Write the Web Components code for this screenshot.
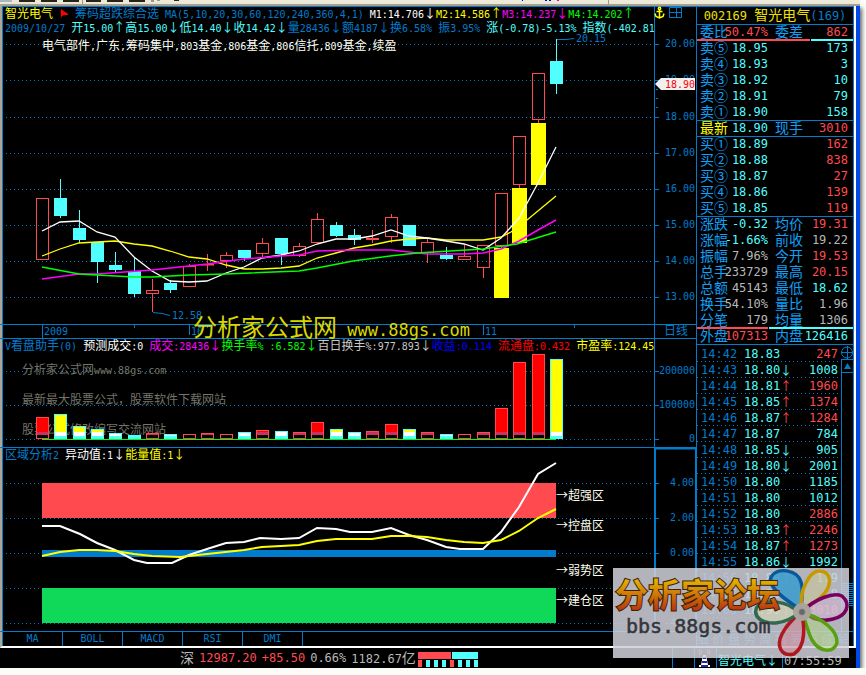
<!DOCTYPE html>
<html lang="zh-CN">
<head>
<meta charset="utf-8">
<title>智光电气 002169</title>
<style>
html,body{margin:0;min-height:100%;background:#fbfbf8}
body{font-family:"DejaVu Sans Mono","Noto Sans CJK SC",monospace}
</style>
</head>
<body>
<stock-terminal></stock-terminal>
<script>
const BLUE='#007ccc',SKY='#10a0f8',CYAN='#50ffff',RED='#ff4b50',GRAY='#b8b8b8';
const MONO='"DejaVu Sans Mono","Noto Sans CJK SC",monospace';
const wide=/[\u2010-\u2bff\u3000-\uffef]+|[^\u2010-\u2bff\u3000-\uffef]+/g;
const isWide=s=>/[\u2010-\u2bff\u3000-\uffef]/.test(s);
/* Latin runs are set smaller than CJK runs, so that one is half as wide as the other */
const mix=s=>s.match(wide).map(r=>isWide(r)?`<span class="c">${r}</span>`:`<span class="n">${r}</span>`).join('');
const mixS=s=>s.match(wide).map(r=>isWide(r)?`<tspan class="c">${r}</tspan>`:`<tspan class="n">${r}</tspan>`).join('');
const seg=(color,s)=>`<span style="color:${color}">${mix(s)}</span>`;
const BASE=`
 *{box-sizing:border-box}
 :host{display:block;font-family:${MONO}}
 .c{font-family:"Noto Sans CJK SC",sans-serif;font-size:var(--c,12px)}
 .n{font-family:"DejaVu Sans Mono",monospace;font-size:var(--n,10px)}
 svg{display:block;overflow:visible}
 text{white-space:pre}`;
const define=(name,css,html)=>customElements.define(name,class extends HTMLElement{
  constructor(){super();
    const t=document.createElement('template');
    t.innerHTML=`<style>${BASE}${css}</style>${html}`;
    this.attachShadow({mode:'open'}).append(t.content.cloneNode(true));}
});
const PANE=`
 :host{display:grid;min-width:0}
 svg,.lines{grid-area:1/1}
 svg{width:100%}
 .lines{overflow-x:clip;overflow-y:visible;padding-left:2px;font-size:12px;line-height:12px}
 .lines div{height:14px;white-space:pre}
 .dot{stroke:${BLUE};stroke-dasharray:1 3;shape-rendering:crispEdges}
 .rule{stroke:${BLUE};shape-rendering:crispEdges}
 .lbl{fill:${BLUE}}`;
const dots=ys=>ys.map(y=>`<line class="dot" x1="6" x2="100%" y1="${y}.5" y2="${y}.5"/>`).join('');
const rule=y=>`<line class="rule" x1="0" x2="101%" y1="${y}.5" y2="${y}.5"/>`;
const vt=(x,y,h)=>`<rect x="${x}" y="${y}" width="1" height="${h}" fill="${BLUE}"/>`;
const cx=i=>Math.round(42+i*18.357);
const line=(p,c,w)=>`<polyline points="${p}" fill="none" stroke="${c}" stroke-width="${w}"/>`;

/* kind, high, body top, body bottom, low */
const candles=[['r',198,198,260,260],['c',179,198,216,218],['c',210,228,240,243],['c',242,242,262,283],['c',252,265,270,273],['c',258,271,294,297],['r',279,290,294,312],['c',280,283,290,293],['r',264,266,287,287],['r',254,264,265,271],['r',252,255,261,268],['c',250,250,258,261],['r',238,243,254,257],['c',238,238,254,265],['r',243,246,256,257],['r',213,219,243,243],['c',222,225,236,237],['c',229,235,240,245],['r',230,238,240,243],['r',214,217,237,243],['c',225,225,246,246],['r',238,242,253,263],['c',247,255,259,260],['r',244,256,260,260],['r',245,245,268,278],['r',193,193,246,248],['r',136,136,185,188],['r',73,73,120,123],['c',39,61,84,94]];
const candle=([k,h,t,b,l],i)=>{const x=cx(i);
  return k==='c'?`<rect x="${x}" y="${h}" width="1" height="${l-h}" fill="${CYAN}"/><rect x="${x-6}" y="${t}" width="13" height="${b-t}" fill="${CYAN}"/>`
  :`<rect x="${x}" y="${h}" width="1" height="${t-h}" fill="${RED}"/><rect x="${x}" y="${b}" width="1" height="${l-b}" fill="${RED}"/><rect x="${x-5.5}" y="${t+.5}" width="12" height="${Math.max(b-t-1,.5)}" fill="none" stroke="${RED}"/>`;};

define('price-chart',PANE+`.lines .third{margin-top:4px;padding-left:37px}.flag{width:22px;display:inline-block;height:9px}.flag svg{width:22px}.mark{fill:#d8d800;--c:24px;--n:17px}`,`
<svg height="332"><g transform="translate(-3,-7)">
${dots([44,80,117,153,189,225,261,297])}
${rule(324)}${rule(338)}
${vt(42,324,14)}${vt(134,325,3)}${vt(189,325,10)}${vt(207,325,3)}${vt(391,325,3)}${vt(483,325,10)}${vt(574,325,3)}
<g class="lbl"><text x="44" y="335">${mixS('2009')}</text><text x="191" y="335">${mixS('10')}</text><text x="485" y="335">${mixS('11')}</text>
<text x="172" y="319">${mixS('12.58')}</text><text x="576" y="42">${mixS('20.15')}</text></g>
${candles.map(candle).join('')}
<path d="M153 312.500L162 313.500L170 315.500M557 39.500H566L574 38.500" fill="none" stroke="${BLUE}"/>
${line('42,256 60,249 79,243 97,242 115,241 134,244 152,246 170,251 189,257 207,259 226,265 244,269 262,269 281,268 299,266 317,258 336,253 354,248 372,245 391,241 409,239 427,238 446,240 483,240 501,237 511,232 527,220 556,196','#ff0',1.3)}
<path d="M494 248h15v50h-15zM512 188h15v55h-15zM531 123h15v62h-15z" fill="#ff0"/>
${line('42,231 60,222 79,221 97,232 115,237 134,257 152,271 170,281 189,282 207,281 226,273 244,267 262,258 281,255 299,251 317,244 336,239 354,239 372,236 391,230 409,236 427,238 446,241 464,244 483,250 501,238 519,218 538,183 556,147','#fff',1.3)}
${line('42,279 79,274 97,274 152,270 207,264 244,259 281,256 299,255 317,251 354,250 391,250 409,252 427,254 464,254 483,253 501,249 519,241 538,230 556,220','#f0f',1.5)}
${line('42,267 79,274 97,275 134,277 152,277 189,275 226,274 299,271 317,268 353,261 390,256 417,253 483,249 517,244 556,232','#0f0',1.5)}
<text class="mark" x="193" y="336">${mixS('分析家公式网')}<tspan class="n"> www.88gs.com</tspan></text>
</g></svg>
<div class="lines">
<div>${seg('#ff0','智光电气')}<span class="flag"><svg width="22" height="9"><path d="M8 0v9l1-2 2-1h4v-1z" fill="#f00"/></svg></span>${seg(BLUE,'筹码超跌综合选 MA(5,10,20,30,60,120,240,360,4,1) ')}${seg('#fff','M1:14.706↓')}${seg('#ff0','M2:14.586↑')}${seg('#f0f','M3:14.237↓')}${seg('#0f0','M4:14.202↑')}</div>
<div>${seg(BLUE,'2009/10/27 ')}${seg(CYAN,'开15.00↑高15.00↓低14.40↓收14.42↓')}${seg(BLUE,'量28436↓额4187↓换6.58% 振3.95% ')}${seg(CYAN,'涨(-0.78)-5.13% 指数(-402.81')}</div>
<div class="third">${seg('#fffff0','电气部件,广东,筹码集中,803基金,806基金,806信托,809基金,续盈')}</div>
</div>`);

const vol=['r417','c414','c426','c429','c433','c435','r433','c434','r434','r433','r434','c432','r430','c431','r432','r422','c429','c432','r431','r424','c429','r432','c434','r434','r432','r408','r362','r354','c359'];
const bar=(s,i)=>{const k=s[0],t=+s.slice(1),x=cx(i)-6,e=k==='r'?RED:CYAN;let o='';
  if(k==='r'){o+=`<rect x="${x}" y="${t}" width="13" height="${439-t}" fill="#000"/>`;
    if(t<432)o+=`<rect x="${x}" y="${t}" width="13" height="${432-t}" fill="#f00"/>`;
    const m=Math.max(t,432);o+=`<rect x="${x}" y="${m}" width="13" height="${435-m}" fill="#cc3060"/>`;
  }else{o+=`<rect x="${x}" y="${t}" width="13" height="${439-t}" fill="${CYAN}"/>`;
    if(t<432)o+=`<rect x="${x}" y="${t}" width="13" height="${432-t}" fill="#ff0"/>`;
    const m=Math.max(t,432);o+=`<rect x="${x}" y="${m}" width="13" height="${436-m}" fill="#fff"/>`;}
  return o+`<rect x="${x+.5}" y="${t+.5}" width="12" height="${438-t}" fill="none" stroke="${e}"/>`;};
define('volume-chart',PANE+`.ad{fill:#74746a}`,`
<svg height="109"><g transform="translate(-3,-339)">
${dots([371,405,439])}${rule(447)}
<g class="ad"><text x="22" y="374">${mixS('分析家公式网')}<tspan class="n">www.88gs.com</tspan></text><text x="22" y="404">${mixS('最新最大股票公式，股票软件下载网站')}</text><text x="22" y="434">${mixS('股票公式修改编写交流网站')}</text></g>
${vol.map(bar).join('')}
<rect x="42" y="439" width="514" height="1" fill="#0f0"/>
</g></svg>
<div class="lines"><div>${seg(BLUE,'V看盘助手(0) ')}${seg('#fff','预测成交:0 ')}${seg('#f0f','成交:28436↓')}${seg('#0f0','换手率% :6.582↓')}${seg('#c8c8c8','百日换手%:977.893↓')}${seg('#00f','收益:0.114 ')}${seg('#f00','流通盘:0.432 ')}${seg('#ff0','市盈率:124.45')}</div></div>`);

define('zone-chart',PANE,`
<svg height="184"><g transform="translate(-3,-448)">
${dots([483,518,553,588,623])}${rule(631)}
<rect x="42" y="483" width="514" height="35" fill="${RED}"/>
<rect x="42" y="550" width="514" height="7" fill="${BLUE}"/>
<rect x="42" y="588" width="514" height="35" fill="#10d858"/>
${line('42,526 60,526 80,534 97,543 115,550 134,560 147,563 172,563 189,555 207,549 226,543 244,542 260,538 281,539 299,538 317,528 336,529 350,532 372,532 391,528 409,535 427,540 446,547 460,549 483,549 501,532 519,507 538,474 556,463','#fff',2)}
${line('42,556 60,552 79,550 97,550 115,551 134,554 152,556 180,557 207,554 244,550 262,547 281,546 299,545 317,541 336,539 372,539 391,536 409,536 427,537 446,540 464,542 483,543 501,540 519,531 538,518 556,509','#ff0',2)}
<g fill="#fffff0">${[['超强区',500],['控盘区',530],['弱势区',575],['建仓区',605]].map(([s,y])=>`<text x="556" y="${y}">${mixS('→'+s)}</text>`).join('')}</g>
</g></svg>
<div class="lines"><div>${seg(BLUE,'区域分析2 ')}${seg('#fff','异动值:1↓')}${seg('#ff0','能量值:1↓')}</div></div>`);

const SCALE=`:host{position:relative}.rule{fill:${BLUE}}text{fill:${BLUE};text-anchor:end}`;
const tick=y=>`<rect x="655" y="${y}" width="4" height="1" fill="${BLUE}"/>`;
const frame=(top,h)=>`<rect x="654" y="${top}" width="1" height="${h}" fill="${BLUE}"/>`;
define('price-scale',SCALE,`<svg width="42" height="332"><g transform="translate(-654,-7)">${frame(7,332)}
${[[44,'20.00'],[80,'19.00'],[117,'18.00'],[153,'17.00'],[189,'16.00'],[225,'15.00'],[261,'14.00'],[297,'13.00']].map(([y,s])=>tick(y)+`<text x="695" y="${y+3}"><tspan class="n">${s}</tspan></text>`).join('')}
<path d="M656 89h2v1h-2zM656 98h2v1h-2zM656 107h2v1h-2z" fill="${BLUE}"/>
<path d="M655 84l6-6h34v12h-34z" fill="#f0f0f0"/><text x="695" y="88" style="fill:#f00"><tspan class="n">18.90</tspan></text>
<path d="M654 324h42v1h-42zM654 338h42v1h-42z" class="rule"/>
<text x="688" y="335"><tspan class="c">日线</tspan></text>
<g fill="none" stroke="#ff0" stroke-width="1.500"><path d="M659.500 10V18M655 13.500l1 3 3.500 1.500 3.500-1.500 1-3M656.500 11.500h6"/><circle cx="659.500" cy="8.500" r="1.200"/></g>
<path d="M669.500 7.500h12v10h-12zM676.500 7.500v10M669.500 12.500h12" fill="none" stroke="${BLUE}"/>
</g></svg>`);
define('volume-scale',SCALE,`<svg width="42" height="109"><g transform="translate(-654,-339)">${frame(339,109)}
${[[371,'200000'],[405,'100000'],[439,'0']].map(([y,s])=>tick(y)+`<text x="695" y="${y+3}"><tspan class="n">${s}</tspan></text>`).join('')}<rect class="rule" x="654" y="447" width="42" height="1"/></g></svg>`);
define('zone-scale',SCALE,`<svg width="42" height="184"><g transform="translate(-654,-448)">
<path d="M655 631V448.500H696V631" fill="none" stroke="${BLUE}" stroke-width="2"/>
${[[483,'4.00'],[518,'2.00'],[553,'0.00'],[588,'-2.00'],[623,'-4.00']].map(([y,s])=>tick(y)+`<text x="694" y="${y+3}"><tspan class="n">${s}</tspan></text>`).join('')}
<rect class="rule" x="654" y="631" width="42" height="1"/></g></svg>`);

define('indicator-tabs',`:host{display:flex;height:14px}button{all:unset;box-sizing:border-box;width:60px;height:14px;text-align:center;color:${BLUE};font:10px/14px "DejaVu Sans Mono",monospace;border-right:1px solid ${BLUE}}`,
['MA','BOLL','MACD','RSI','DMI'].map(s=>`<button type="button">${s}</button>`).join(''));

/* label, value, value colour, label 2, value 2, value-2 colour */
const row=(a,b,bc,c,d,dc,cls='',lc=SKY)=>`<tr class="${cls}"><th style="color:${lc}">${a}</th><td style="color:${bc}">${b}</td><th>${c}</th><td style="color:${dc}">${d}</td></tr>`;
define('quote-panel',`
 :host{color:${SKY}}
 h2{margin:0;height:18px;border-bottom:1px solid ${BLUE};font-weight:400;font-size:14px;line-height:15px;text-align:center;color:#f0e000;white-space:pre;--c:14px;--n:12px}
 h2 b{font-weight:400;color:${BLUE}}
 table,tbody{display:block}
 tr{display:grid;grid-template-columns:24px 44px 28px 1fr;padding:0 5px 0 3px;height:16px}
 th,td{padding:0;font-weight:400;line-height:15px;white-space:nowrap;height:14px}
 th{font-family:"Noto Sans CJK SC",sans-serif;font-size:14px;line-height:12px;text-align:left}
 th+td+th{padding-left:7px}
 td{font-size:12px;text-align:right}
 .end{border-bottom:1px solid ${BLUE}}
 .bar{border-bottom:2px solid;border-image:linear-gradient(90deg,${RED} var(--s),#000 var(--s),#000 calc(var(--s) + 1px),${CYAN} calc(var(--s) + 1px)) 1}`,`
<h2>${mix('002169 智光电气')}<b>${mix('(169)')}</b></h2>
<table><tbody>
${row('委比','50.47%',RED,'委差','862',RED,'bar').replace('<tr','<tr style="--s:113px"')}
${[['⑤','18.95','173'],['④','18.93','3'],['③','18.92','10'],['②','18.91','79'],['①','18.90','158']].map(([n,p,v],i)=>row('卖'+n,p,CYAN,'',v,CYAN,i==4?'end':'')).join('')}
${row('最新','18.90',CYAN,'现手','3010',RED,'end','#ff0')}
${[['①','18.89','162'],['②','18.88','838'],['③','18.87','27'],['④','18.86','139'],['⑤','18.85','119']].map(([n,p,v],i)=>row('买'+n,p,CYAN,'',v,RED,i==4?'end':'')).join('')}
${row('涨跌','-0.32',CYAN,'均价','19.31',RED)}${row('涨幅','-1.66%',CYAN,'前收','19.22',GRAY)}${row('振幅','7.96%',GRAY,'今开','19.53',RED)}${row('总手','233729',GRAY,'最高','20.15',RED)}${row('总额','45143',GRAY,'最低','18.62',CYAN)}${row('换手','54.10%',GRAY,'量比','1.96',GRAY)}${row('分笔','179',GRAY,'均量','1306',GRAY,'bar').replace('<tr','<tr style="--s:71px"')}
${row('外盘','107313',RED,'内盘','126416',CYAN,'end')}
</tbody></table>`);

const ticks=[['14:42','18.83','',247,1],['14:43','18.80','↓',1008,0],['14:44','18.81','↑',1960,1],['14:45','18.85','↑',1374,1],['14:46','18.87','↑',1284,1],['14:47','18.87','',784,0],['14:48','18.85','↓',905,0],['14:49','18.80','↓',2001,0],['14:50','18.80','',1185,0],['14:51','18.80','',1012,0],['14:52','18.80','',2886,1],['14:53','18.83','↑',2246,1],['14:54','18.87','↑',1273,1],['14:55','18.86','↓',1992,0],['14:56','18.88','↑',179,0],['14:57','18.88','',8,0],['15:00','18.90','↑',3010,1]];
define('tick-list',`
 :host{display:grid;grid-template-columns:1fr 12px;flex:1;font-size:12px}
 table{border-spacing:0;width:100%;align-self:start;table-layout:fixed;padding-top:1px}
 tr{background:linear-gradient(90deg,${BLUE} 1px,transparent 1px) left bottom/4px 1px repeat-x}
 td{padding:0;height:16px;line-height:16px;white-space:nowrap;font-size:12px}
 td:first-child{width:47px;padding-left:4px;color:${BLUE}}
 td:nth-child(2){width:36px;color:${CYAN}}
 td:nth-child(3){width:14px;font-family:"Noto Sans CJK SC",sans-serif}
 td:last-child{text-align:right;padding-right:3px}
 .scroll{display:flex;flex-direction:column;color:${BLUE}}
 .scroll svg{flex:none}
 .track{flex:1;border-left:1px solid ${BLUE};display:flex;align-items:flex-end}
 .thumb{width:100%;height:24px;margin-bottom:24px;background:repeating-linear-gradient(${BLUE} 0 1px,#000 1px 2px)}`,`
<table><tbody>${ticks.map(([t,p,a,v,r])=>`<tr><td>${t}</td><td>${p}</td><td style="color:${a==='↑'?RED:CYAN}">${a}</td><td style="color:${r?RED:CYAN}">${v}</td></tr>`).join('')}</tbody></table>
<div class="scroll"><svg width="12" height="28"><path d="M0 7.500H12M6.500 1V14M.5 14.500H12M.5 14V28M.5 27.500H12" stroke="${BLUE}" fill="none"/><circle cx="6" cy="7.500" r="5.500" fill="none" stroke="${BLUE}"/><path d="M3 24h7l-3.500-6z" fill="${BLUE}"/></svg><div class="track"><div class="thumb"></div></div></div>`);

define('panel-tabs',`:host{height:15px;border-top:1px solid ${BLUE};display:flex;color:${BLUE}}
 button{all:unset;flex:1;font:12px/14px "Noto Sans CJK SC",sans-serif}button:first-child{color:#fff}`,
[...'细价盘势周指筹不成解'].map(s=>`<button type="button">${s}</button>`).join(''));

define('tool-strip',`:host{height:6px;background:#ece9d8;border-bottom:2px solid #aaa698;overflow:hidden}svg{width:100%}`,
`<svg height="4"><path d="M0 0h12v2H0z" fill="#a8b8b8"/><path d="M19 0h16v2H19zM41 0h16v2H41zM63 0h16v2H63zM86 0h15v2H86zM107 0h16v2h-16zM129 0h16v2h-16zM174 0h5v1h-5z" fill="#282418"/><path d="M82 0h1v4h-1zM151 0h3v2h-3zM157 0h3v1h-3zM608 0h1v4h-1z" fill="#9c9888"/><path d="M522 0h1v1h-1zM545 0h2v1h-2zM549 0h2v1h-2z" fill="#00c"/><path d="M557 0h2v1h-2z" fill="#d0d"/></svg>`);

define('status-bar',`
 :host{display:grid;grid-template-columns:1fr 184px;height:20px;background:#000;--c:14px;--n:12px;color:${GRAY};font-size:14px;line-height:18px;white-space:pre}
 .idx{display:flex;padding-left:180px;gap:5px;min-width:0}
 .idx span{white-space:pre}
 .idx svg{margin:3px 0 0 -3px}
 .r{display:flex}
 .r>*{border-left:1px solid ${BLUE};height:20px}
 .a{width:22px}.i{width:22px}.nm,.t{padding:3px 0 0 1px}.nm{width:66px;color:${CYAN};--c:12px;font-size:12px}`,`<div class="idx"><span>${mix('深')}</span>${seg(RED,'12987.20')}${seg(RED,'+85.50')}<span>${mix('0.66%')}</span><span>${mix('1182.67亿')}</span><svg width="61" height="16"><path d="M0 1h33v7H0zM0 9h4v7H0zM32 9h4v7h-4z" fill="${RED}"/><path d="M34 1h26v7H34zM8 9h4v7H8zM16 9h4v7h-4zM24 9h4v7h-4zM40 9h4v7h-4zM48 9h4v7h-4zM56 9h4v7h-4z" fill="${CYAN}"/></svg></div><div class="r"><span class="a"></span><span class="i"><svg width="20" height="20"><path d="M8 7h3l2 10h2v2H4v-2h2z" fill="#fff"/><path d="M8 9h3v2H8zM7 13h5v2H7zM6 17h7v2H6z" fill="#22a"/><path d="M7 6q-2-2 0-4M12 6q2-2 0-4M5 7q-2-3 0-6M14 7q2-3 0-6" stroke="#c66" fill="none"/></svg></span><span class="nm">${mix('智光电气↓')}</span><span class="t">${mix('07:55:59')}</span></div>`);

define('forum-badge',`:host{width:236px;height:90px;background:rgba(208,208,218,.86)}svg{width:236px}
 .t{font:bold 33px "Noto Sans CJK SC",sans-serif;fill:url(#g);stroke:#402008;stroke-width:2;paint-order:stroke}
 .u{font:20px "DejaVu Sans Mono",monospace;fill:#34363a;stroke:#34363a;stroke-width:.5}`,`
<svg height="90"><defs><linearGradient id="g" x1="0" y1="0" x2="0" y2="1"><stop offset=".25" stop-color="#e0b000"/><stop offset=".85" stop-color="#b83810"/></linearGradient></defs>
<g stroke-width="3.500" stroke-linejoin="round">
<path d="M188 42C176 34 154 20 158 9C164 -1 184 1 188 14C191 24 189 34 188 42Z" fill="#2898d0" fill-opacity=".75" stroke="#08589c"/>
<path d="M189 41C185 24 197 2 207 3C220 4 219 19 208 29C202 35 195 38 189 41Z" fill="#d8d088" fill-opacity=".4" stroke="#c89800"/>
<path d="M190 43C202 31 220 24 229 28C239 37 233 48 220 51C208 54 198 51 190 43Z" fill="#e8b0e0" fill-opacity=".3" stroke="#780060"/>
<path d="M188 44C210 50 225 63 224 75C220 86 206 84 199 72C194 63 193 52 188 44Z" fill="#b0e070" fill-opacity=".4" stroke="#58a010"/>
<path d="M188 44C192 58 193 78 181 86C168 89 163 78 169 66C174 56 181 50 188 44Z" fill="#e07080" fill-opacity=".35" stroke="#b01820"/>
<path d="M186 45C174 32 153 31 144 39C139 49 150 56 163 55C172 54 180 50 186 45Z" fill="#e8e8b0" fill-opacity=".4" stroke="#306850"/></g>
<circle cx="189" cy="44" r="9" fill="#a8a49c"/><circle cx="189" cy="44" r="3" fill="#686870" stroke="#807c78"/>
<text class="t" x="2" y="39">分析家论坛</text><text class="u" x="13" y="65">bbs.88gs.com</text></svg>`);

define('stock-terminal',`
 :host{position:relative;padding-right:6px}
 .win{border-right:4px solid #0048e8;box-shadow:2px 2px 4px #666;background:#000}
 .body{display:grid;grid-template-columns:minmax(0,1fr) 42px 158px;grid-template-rows:auto auto auto auto;border-left:2px solid #aaa698;border-right:2px solid #fff;border-bottom:2px solid #fff;position:relative;padding:1px 0 0 1px}
 .body::before{content:"";position:absolute;inset:0;border-top:1px solid ${BLUE};border-left:1px solid ${BLUE};pointer-events:none}
 aside{grid-area:1/3/5/4;display:flex;flex-direction:column;border-left:1px solid ${BLUE};border-right:1px solid ${BLUE};min-height:0}
 forum-badge{position:absolute;right:17px;bottom:10px}`,`
<tool-strip></tool-strip>
<div class="win"><div class="body">
<price-chart></price-chart><price-scale></price-scale>
<volume-chart></volume-chart><volume-scale></volume-scale>
<zone-chart></zone-chart><zone-scale></zone-scale>
<indicator-tabs></indicator-tabs><span></span>
<aside><quote-panel></quote-panel><tick-list></tick-list><panel-tabs></panel-tabs></aside>
</div><status-bar></status-bar></div>
<forum-badge></forum-badge>`);
</script>
</body>
</html>
